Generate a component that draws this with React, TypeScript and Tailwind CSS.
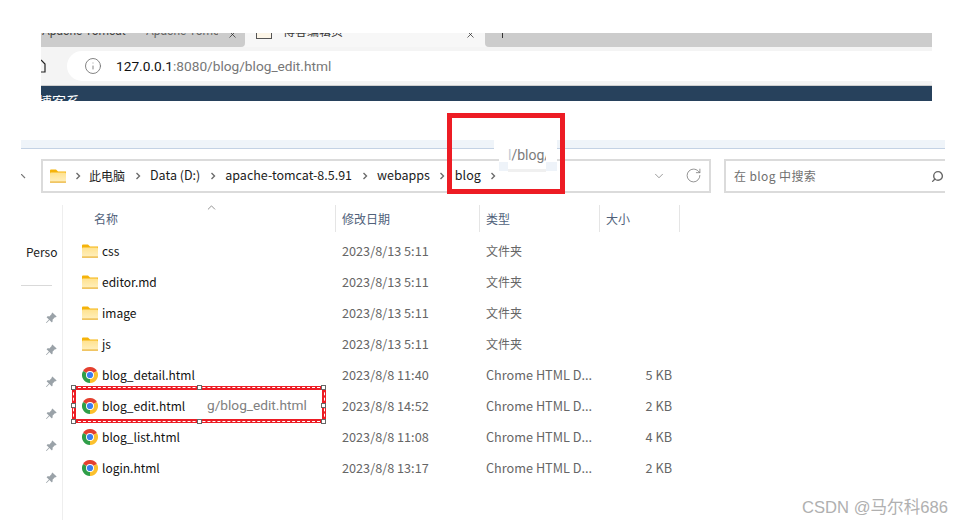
import { ChevronDown, ChevronUp, Info, RotateCw, Search, X } from 'lucide-react'
import { BsPinAngleFill } from 'react-icons/bs'

const UI_FONT = 'font-["Noto_Sans_CJK_SC","Noto_Sans",sans-serif]'

function FolderIcon() {
  return (
    <svg width="16" height="14" viewBox="0 0 16 14" className="shrink-0">
      <defs>
        <linearGradient id="folderBody" x1="0" y1="0" x2="0" y2="1">
          <stop offset="0" stopColor="#ffe28f" />
          <stop offset="1" stopColor="#fff0c0" />
        </linearGradient>
      </defs>
      <path d="M0 1.5Q0 .5 1 .5H6L8 2.5H16V5H0Z" fill="#f5b30a" />
      <rect x="0" y="3.5" width="16" height="10" rx="1" fill="url(#folderBody)" />
      <rect x="0" y="12.5" width="16" height="1.2" fill="#eab030" />
    </svg>
  )
}

function ChromeIcon() {
  return (
    <svg width="16" height="16" viewBox="0 0 16 16" className="shrink-0">
      <path d="M8 8L1.07 4A8 8 0 0 1 14.93 4Z" fill="#e4402f" />
      <path d="M8 8L14.93 4A8 8 0 0 1 8 16Z" fill="#fbc02d" />
      <path d="M8 8L8 16A8 8 0 0 1 1.07 4Z" fill="#2f9e48" />
      <circle cx="8" cy="8" r="4" fill="#fff" />
      <circle cx="8" cy="8" r="3.1" fill="#3b7df0" />
    </svg>
  )
}

function CrumbArrow({ first }: { first?: boolean }) {
  return (
    <span className={first ? 'flex w-[23px] shrink-0 justify-center' : 'flex w-[25px] shrink-0 justify-center'}>
      <svg width="6" height="8" viewBox="0 0 6 8">
        <path d="M1.5 1L4.5 4L1.5 7" fill="none" stroke="#6b6b6b" strokeWidth="1.4" />
      </svg>
    </span>
  )
}

const files = [
  { name: 'css', date: '2023/8/13 5:11', type: '文件夹', size: '', folder: true },
  { name: 'editor.md', date: '2023/8/13 5:11', type: '文件夹', size: '', folder: true },
  { name: 'image', date: '2023/8/13 5:11', type: '文件夹', size: '', folder: true },
  { name: 'js', date: '2023/8/13 5:11', type: '文件夹', size: '', folder: true },
  { name: 'blog_detail.html', date: '2023/8/8 11:40', type: 'Chrome HTML D...', size: '5 KB', folder: false },
  { name: 'blog_edit.html', date: '2023/8/8 14:52', type: 'Chrome HTML D...', size: '2 KB', folder: false },
  { name: 'blog_list.html', date: '2023/8/8 11:08', type: 'Chrome HTML D...', size: '4 KB', folder: false },
  { name: 'login.html', date: '2023/8/8 13:17', type: 'Chrome HTML D...', size: '2 KB', folder: false },
]

const handles = [
  'left-[-5px] top-[-5px]',
  'left-[121px] top-[-5px]',
  'right-[-4px] top-[-5px]',
  'left-[-5px] top-[13px]',
  'right-[-4px] top-[13px]',
  'left-[-5px] bottom-[-5px]',
  'left-[121px] bottom-[-5px]',
  'right-[-4px] bottom-[-5px]',
]

function BrowserStrip() {
  return (
    <div className="ml-[41px] mt-[33px] w-[891px] shrink-0 font-['Roboto',sans-serif]">
      <div className="flex h-[14px] overflow-hidden bg-[#f7f7f7]">
        <div className="flex w-[204px] shrink-0 overflow-hidden rounded-br-[4px] bg-[#cccccc] text-[12px] text-[#444]">
          <span className="ml-[1px] mt-[-12px] w-[104px] shrink-0 leading-[20px]">Apache Tomcat</span>
          <span className="mt-[-12px] w-[72px] shrink-0 overflow-hidden whitespace-nowrap leading-[20px] text-[#666]">Apache Tomc</span>
          <X size={11} strokeWidth={1.5} className="ml-[9px] mt-[-4px] shrink-0 text-[#222]" />
        </div>
        <div className="flex w-[240px] shrink-0 text-[12px] text-[#333]">
          <span className="ml-[11px] mt-[-8px] h-[14px] w-[16px] shrink-0 border border-[#555] bg-[#fdf6e8]" />
          <span className="ml-[11px] mt-[-12px] w-[182px] shrink-0 font-['Noto_Sans_CJK_SC',sans-serif] leading-[20px]">博客编辑页</span>
          <X size={11} strokeWidth={1.5} className="mt-[-4px] shrink-0 text-[#222]" />
        </div>
        <div className="flex grow rounded-bl-[4px] bg-[#cccccc]">
          <span className="ml-[17px] h-[5px] w-px bg-[#333]" />
        </div>
      </div>
      <div className="flex h-[39px] items-center border-b border-[#cfcfcf] bg-[#f4f4f4] pb-[1px]">
        <svg width="5" height="14" viewBox="0 0 5 14" className="shrink-0">
          <path d="M0 1L4 5V13H0" fill="none" stroke="#222" strokeWidth="1.2" />
        </svg>
        <div className="ml-[21px] flex h-[30px] grow items-center rounded-l-full bg-white pl-[17px]">
          <Info size={18} strokeWidth={1.2} className="text-[#777]" />
          <span className="ml-[14px] pt-[1px] text-[13.7px] text-[#777]">
            <span className="text-[#111]">127.0.0.1</span>:8080/blog/blog_edit.html
          </span>
        </div>
      </div>
      <div className={`h-[15px] overflow-hidden bg-[#27415c] text-[14px] text-white ${UI_FONT}`}>
        <span className="ml-[-3px] mt-[5px] block whitespace-nowrap leading-[20px]">博客系</span>
      </div>
    </div>
  )
}

function AddressBar() {
  return (
    <div className={`ml-[21px] mt-[10px] flex h-[34px] w-[924px] shrink-0 text-[12.5px] ${UI_FONT}`}>
      <div className="flex w-[20px] shrink-0 items-center">
        <svg width="5" height="5" viewBox="0 0 5 5">
          <path d="M0 0L4 4" stroke="#777" strokeWidth="1.2" />
        </svg>
      </div>
      <div className="flex w-[670px] shrink-0 items-center border-2 border-[#dbdbdb] pb-[1px] pl-[7px] pr-[7px] text-[#1c1c1c]">
        <FolderIcon />
        <CrumbArrow first />
        <span className="text-[12px]">此电脑</span>
        <CrumbArrow />
        <span>Data (D:)</span>
        <CrumbArrow />
        <span>apache-tomcat-8.5.91</span>
        <CrumbArrow />
        <span>webapps</span>
        <CrumbArrow />
        <span>blog</span>
        <CrumbArrow />
        <ChevronDown size={14} strokeWidth={1} className="ml-auto text-[#555]" />
        <RotateCw size={17} strokeWidth={1.1} className="ml-[19px] text-[#777]" />
      </div>
      <div className="ml-[13px] flex grow items-center justify-between border-y-2 border-l-2 border-[#dbdbdb] pl-[8px] pr-[1px] text-[12px] text-[#707070]">
        <span className="tracking-[0.4px]">在 blog 中搜索</span>
        <Search size={13} strokeWidth={2.6} className="-scale-x-100 text-[#666]" />
      </div>
    </div>
  )
}

function Sidebar() {
  return (
    <div className="flex w-[42px] shrink-0 flex-col border-r border-[#eeeeee]">
      <div className="ml-[5px] mt-[37px] h-[20px] overflow-hidden text-[12px] leading-[20px] text-[#222]">Perso</div>
      <div className="mt-[23px] h-px w-[31px] bg-[#d9d9d9]" />
      <div className="mt-[26px] flex flex-col gap-[20px] pl-[24px]">
        {[0, 1, 2, 3, 4, 5].map((i) => (
          <BsPinAngleFill key={i} size={12} className="text-[#9aa2a8]" />
        ))}
      </div>
    </div>
  )
}

function FileTable() {
  return (
    <div className="grow">
      <div className="flex h-[27px] text-[12px] text-[#50617a]">
        <div className="relative flex w-[273px] items-center border-r border-[#e5e5e5] pl-[31px]">
          名称
          <ChevronUp size={13} strokeWidth={1.3} className="absolute left-[142px] top-[-4px] text-[#666]" />
        </div>
        <div className="flex w-[144px] items-center border-r border-[#e5e5e5] pl-[6px]">修改日期</div>
        <div className="flex w-[120px] items-center border-r border-[#e5e5e5] pl-[6px]">类型</div>
        <div className="flex w-[80px] items-center border-r border-[#e5e5e5] pl-[6px]">大小</div>
      </div>
      <div className="mt-[3px]">
        {files.map((f) => (
          <div key={f.name} className="flex h-[31px] items-center text-[12.7px] text-[#666]">
            <div className="flex w-[273px] items-center gap-[4px] pl-[19px] text-[12px] text-[#111]">
              {f.folder ? <FolderIcon /> : <ChromeIcon />}
              <span>{f.name}</span>
            </div>
            <div className="w-[144px] pl-[6px]">{f.date}</div>
            <div className={f.folder ? 'w-[120px] pl-[6px] text-[12px]' : 'w-[120px] pl-[6px]'}>{f.type}</div>
            <div className="w-[72px] text-right">{f.size}</div>
          </div>
        ))}
      </div>
    </div>
  )
}

export default function App() {
  return (
    <div className={`relative flex h-[525px] w-[963px] flex-col overflow-hidden bg-white ${UI_FONT}`}>
      <BrowserStrip />
      <div className="ml-[21px] mt-[39px] h-[9px] w-[924px] shrink-0 border-b border-[#c4d2e4] bg-[#eff4f9]" />
      <AddressBar />
      <div className="ml-[21px] mt-[12px] flex h-[315px] w-[924px] shrink-0">
        <Sidebar />
        <FileTable />
      </div>

      {/* pasted patches and annotations sitting on top of the screenshot */}
      <div className="absolute left-[494px] top-[140px] h-[10px] w-[63px] bg-white" />
      <div className="absolute left-[499px] top-[150px] h-[21px] w-[58px] bg-white">
        <div className="absolute bottom-0 left-0 right-0 h-[9px] bg-[#eef3f9]" />
        <div className="absolute bottom-[-1px] left-[9px] h-[10px] w-[38px] bg-white">
          <div className="absolute bottom-0 left-0 right-0 h-[3px] bg-[#f0f0f0]" />
        </div>
        <span className="absolute left-[9px] top-[-5px] w-[38px] overflow-hidden whitespace-nowrap text-[14px] leading-[20px] text-[#7b7b7b] font-['Roboto',sans-serif]">
          <span className="text-[#c3ccd8]">l</span>/blog/
        </span>
      </div>
      <div className="absolute left-[447px] top-[113px] h-[81px] w-[118px] border-[5px] border-[#ed1c24]" />

      <div className="absolute left-[72px] top-[386px] h-[37px] w-[254px] border-[4px] border-[#ed1c24]">
        <div className="absolute inset-[-3px] border border-dashed border-white" />
        {handles.map((h) => (
          <span key={h} className={`absolute h-[5px] w-[5px] border border-[#666] bg-white ${h}`} />
        ))}
        <span className="absolute left-[131px] top-[5px] whitespace-nowrap text-[13.7px] leading-[20px] text-[#808080] font-['Roboto',sans-serif]">g/blog_edit.html</span>
      </div>

      <div className="absolute left-[802px] top-[497px] whitespace-nowrap text-[16.6px] leading-[22px] text-[#b0b0b0] font-['Liberation_Sans','Noto_Sans_CJK_SC',sans-serif]">
        CSDN @马尔科686
      </div>
    </div>
  )
}
